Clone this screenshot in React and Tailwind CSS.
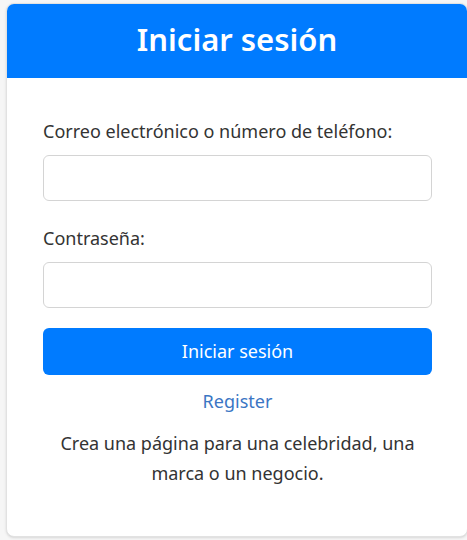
import React from 'react';

export default function App() {
  return (
    <div className="min-h-[540px] bg-[#f6f6f6] pt-[3px] pl-[6px]" style={{ fontFamily: '"Noto Sans", "Open Sans", Arial, sans-serif' }}>
      <div className="w-[462px] h-[534px] bg-white border border-[#e2e2e2] rounded-lg shadow-sm overflow-hidden flex flex-col">
        {/* Header */}
        <div className="h-[74px] bg-[#007bff] flex items-center justify-center">
          <h1 className="text-white text-[31px] font-semibold leading-none -mt-1">Iniciar sesión</h1>
        </div>

        {/* Form */}
        <form className="pl-[36px] pr-[35px] pt-[40px] flex flex-col text-[#333]" onSubmit={e => e.preventDefault()}>
          <label className="text-[18px] leading-[26px]">Correo electrónico o número de teléfono:</label>
          <input type="text" className="mt-[11px] h-[46px] w-full border border-[#d4d4d4] rounded-md bg-white focus:outline-none" />

          <label className="mt-[24px] text-[18px] leading-[26px]">Contraseña:</label>
          <input type="password" className="mt-[11px] h-[46px] w-full border border-[#d4d4d4] rounded-md bg-white focus:outline-none" />

          <button type="submit" className="mt-[20px] h-[47px] w-full bg-[#007bff] text-white text-[18px] rounded-md">
            Iniciar sesión
          </button>

          <a href="#" className="mt-[13px] text-center text-[18px] leading-[26px] text-[#3b76c4]">Register</a>

          <p className="mt-[14px] text-center text-[18px] leading-[30px] text-[#333]">
            Crea una página para una celebridad, una marca o un negocio.
          </p>
        </form>
      </div>
    </div>
  );
}
